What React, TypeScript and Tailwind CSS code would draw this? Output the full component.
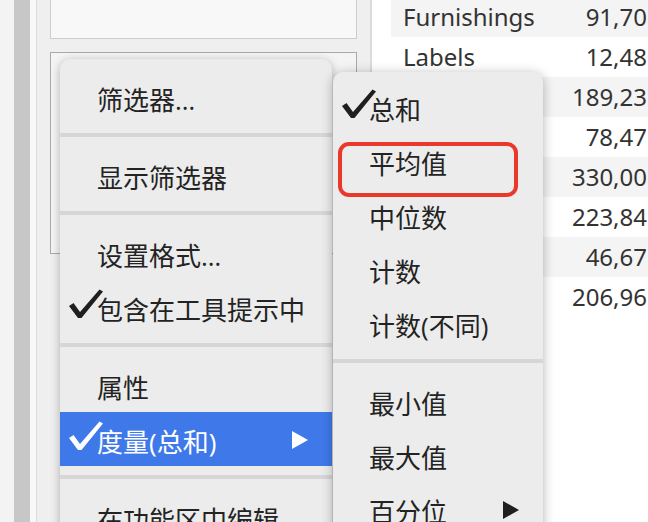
import React from "react";

const cjk = { fontFamily: '"Open Sans", "Noto Sans CJK SC", sans-serif' };
const latin = { fontFamily: '"Noto Sans", "Open Sans", sans-serif' };

// only the first two labels are visible, the rest sit under the submenu
const rows = [
  { name: "Furnishings", value: "91,70" },
  { name: "Labels", value: "12,48" },
  { name: "", value: "189,23" },
  { name: "", value: "78,47" },
  { name: "", value: "330,00" },
  { name: "", value: "223,84" },
  { name: "", value: "46,67" },
  { name: "", value: "206,96" },
];

function Check({ white = false }: { white?: boolean }) {
  return (
    <svg width="34" height="30" viewBox="0 0 34 30" className="absolute left-[9px] top-[9px]">
      <path d="M0 17 L4.5 14 L11 23 L30.5 0.5 L34 2.5 L12.5 29 L9 29 Z" fill={white ? "#ffffff" : "#1f1f1f"} />
    </svg>
  );
}

function Arrow({ white = false }: { white?: boolean }) {
  return (
    <svg width="16" height="18" viewBox="0 0 16 18" className="absolute right-[24px] top-[19px]">
      <path d="M0 0 L16 9 L0 18 Z" fill={white ? "#ffffff" : "#1f1f1f"} />
    </svg>
  );
}

type Item = { label: string; checked?: boolean; sub?: boolean; active?: boolean } | "sep";

function MenuItem({ item, indent }: { item: Exclude<Item, "sep">; indent: string }) {
  return (
    <div
      className={`relative flex h-[54px] items-center text-[26px] ${indent} ${
        item.active ? "bg-[#3f79e9] text-white" : "text-[#232323]"
      }`}
      style={cjk}
    >
      {item.checked && <Check white={item.active} />}
      <span className="pt-[5px] leading-none">{item.label}</span>
      {item.sub && <Arrow white={item.active} />}
    </div>
  );
}

function Separator() {
  return <div className="mt-[9px] mb-[11px] h-[4px] bg-[#d6d6d6]" />;
}

const mainItems: Item[] = [
  { label: "筛选器…" },
  "sep",
  { label: "显示筛选器" },
  "sep",
  { label: "设置格式…" },
  { label: "包含在工具提示中", checked: true },
  "sep",
  { label: "属性" },
  { label: "度量(总和)", checked: true, sub: true, active: true },
  "sep",
  { label: "在功能区中编辑" },
];

const subItems: Item[] = [
  { label: "总和", checked: true },
  { label: "平均值" },
  { label: "中位数" },
  { label: "计数" },
  { label: "计数(不同)" },
  "sep",
  { label: "最小值" },
  { label: "最大值" },
  { label: "百分位", sub: true },
];

export default function App() {
  return (
    <div className="relative h-[522px] w-[648px] overflow-hidden bg-white">
      <div className="flex h-full">
        <div className="w-[14px] bg-[#f3f3f3]" />
        <div className="w-[16px] bg-[#c7c7c7]" />
        <div className="w-[6px] bg-[#f8f8f8]" />
        <div className="w-[1px] bg-[#dcdcdc]" />
        <div className="flex w-[333px] flex-col gap-[13px] bg-[#efefef] px-[13px]">
          <div className="h-[39px] border border-t-0 border-[#cdcdcd] bg-[#f8f8f8]" />
          <div className="h-[202px] border border-[#a9a9a9] bg-[#f4f4f4]" />
        </div>
        <div className="w-[2px] bg-[#dadada]" />
        <div className="flex-1 pl-[19px]">
          <div className="-mt-[3px]" style={latin}>
            {rows.map((r, i) => (
              <div
                key={i}
                className={`flex h-[40px] items-center justify-between pl-[12px] pr-[1px] text-[24px] text-[#333333] ${
                  i % 2 === 0 ? "bg-[#f4f4f4]" : "bg-white"
                }`}
              >
                <span>{r.name}</span>
                <span>{r.value}</span>
              </div>
            ))}
          </div>
        </div>
      </div>

      <div className="absolute left-[60px] top-[59px] h-[520px] w-[272px] rounded-[10px] bg-[#ececec] pt-[11px] shadow-[0_2px_10px_rgba(0,0,0,0.28)]">
        {mainItems.map((it, i) =>
          it === "sep" ? <Separator key={i} /> : <MenuItem key={i} item={it} indent="pl-[37px]" />
        )}
      </div>

      <div className="absolute left-[333px] top-[72px] h-[520px] w-[210px] rounded-[10px] bg-[#ececec] pt-[8px] shadow-[0_2px_12px_rgba(0,0,0,0.3)]">
        {subItems.map((it, i) =>
          it === "sep" ? <Separator key={i} /> : <MenuItem key={i} item={it} indent="pl-[36px]" />
        )}
        <div className="absolute left-[5px] top-[70px] h-[55px] w-[180px] rounded-[11px] border-[4px] border-[#e8392b]" />
      </div>
    </div>
  );
}
